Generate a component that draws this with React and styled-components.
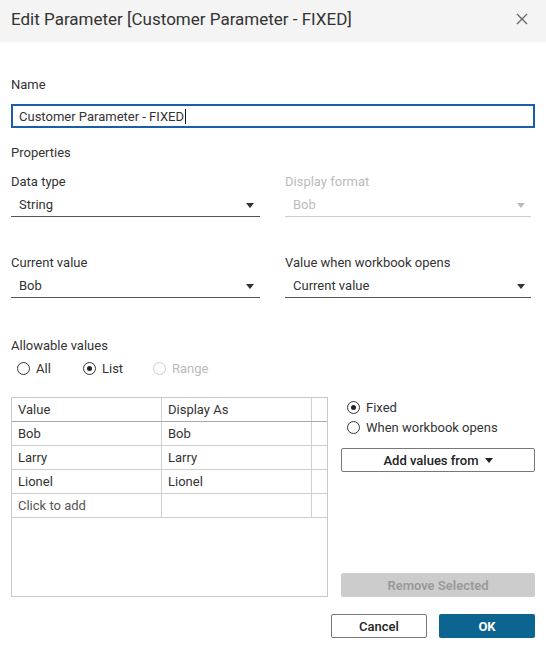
import { styled, createGlobalStyle } from "styled-components";

const GlobalStyle = createGlobalStyle`
  html, body {
    margin: 0;
    padding: 0;
    background: #fff;
  }
  body {
    font-family: Roboto, "Liberation Sans", sans-serif;
    color: #333;
  }
`;

const Dialog = styled.div`
  width: 546px;
  height: 648px;
  display: flex;
  flex-direction: column;
  background: #fff;
  overflow: hidden;
`;

const TitleBar = styled.div`
  height: 42px;
  flex: none;
  background: #f4f4f4;
  display: flex;
  align-items: center;
  justify-content: space-between;
  padding: 0 18px 0 11px;
  box-sizing: border-box;
`;

const Title = styled.h1`
  margin: 0 0 4px;
  font-size: 17px;
  font-weight: 400;
  color: #333;
`;

const CloseButton = styled.button`
  border: none;
  background: none;
  padding: 0;
  margin-bottom: 4px;
  display: flex;
  cursor: pointer;
`;

const Body = styled.div`
  flex: 1;
  display: flex;
  flex-direction: column;
  padding: 0 11px;
`;

const Label = styled.div`
  font-size: 13px;
  line-height: 16px;
  color: ${(p) => (p.disabled ? "#bbb" : "#333")};
  margin-top: ${(p) => p.top || 0}px;
`;

const NameInput = styled.div`
  margin-top: 11px;
  height: 24px;
  box-sizing: border-box;
  border: 2px solid #1a5ea8;
  display: flex;
  align-items: center;
  padding-left: 6px;
  font-size: 13px;
  color: #333;
`;

const Caret = styled.span`
  display: inline-block;
  width: 1px;
  height: 15px;
  background: #111;
  margin-left: 1px;
`;

const FieldGrid = styled.div`
  display: grid;
  grid-template-columns: 249px 246px;
  column-gap: 25px;
  margin-top: ${(p) => p.top}px;
`;

const Field = styled.div`
  display: flex;
  flex-direction: column;
`;

const Select = styled.div`
  margin-top: 4px;
  height: 23px;
  box-sizing: border-box;
  border-bottom: 1px solid ${(p) => (p.disabled ? "#ccc" : "#555")};
  display: flex;
  align-items: center;
  justify-content: space-between;
  padding: 0 6px 1px 8px;
  font-size: 13px;
  color: ${(p) => (p.disabled ? "#bbb" : "#333")};
`;

const Arrow = styled.span`
  width: 0;
  height: 0;
  border-left: 4px solid transparent;
  border-right: 4px solid transparent;
  border-top: 5px solid ${(p) => p.color || "#333"};
  margin-top: 1px;
`;

const RadioRow = styled.div`
  display: flex;
  gap: ${(p) => p.gap || 0}px;
  flex-direction: ${(p) => (p.column ? "column" : "row")};
  margin-top: ${(p) => p.top || 0}px;
  padding-left: ${(p) => p.indent || 0}px;
`;

const RadioItem = styled.label`
  display: flex;
  align-items: center;
  gap: 6px;
  height: 16px;
  font-size: 13px;
  color: ${(p) => (p.disabled ? "#bbb" : "#333")};
  min-width: ${(p) => p.width || 0}px;
`;

const Circle = styled.span`
  width: 13px;
  height: 13px;
  box-sizing: border-box;
  border-radius: 50%;
  border: 1px solid ${(p) => (p.disabled ? "#ccc" : "#333")};
  display: flex;
  align-items: center;
  justify-content: center;

  &::after {
    content: "";
    width: 5px;
    height: 5px;
    border-radius: 50%;
    background: #222;
    display: ${(p) => (p.checked ? "block" : "none")};
  }
`;

const ListArea = styled.div`
  margin-top: 21px;
  display: flex;
  gap: 13px;
`;

const Table = styled.div`
  width: 317px;
  height: 200px;
  box-sizing: border-box;
  border: 1px solid #c8c8c8;
  display: flex;
  flex-direction: column;
`;

const Row = styled.div`
  display: grid;
  grid-template-columns: 150px 150px 1fr;
  height: 24px;
  box-sizing: border-box;
  border-bottom: 1px solid ${(p) => (p.header ? "#a9a9a9" : "#cfcfcf")};
`;

const Cell = styled.div`
  display: flex;
  align-items: center;
  padding-left: 6px;
  font-size: 13px;
  color: ${(p) => (p.muted ? "#555" : "#333")};
  border-right: 1px solid #cfcfcf;

  &:last-child {
    border-right: none;
  }
`;

const SidePanel = styled.div`
  flex: 1;
  display: flex;
  flex-direction: column;
  padding-top: 2px;
`;

const OutlineButton = styled.button`
  height: 24px;
  box-sizing: border-box;
  border: 1px solid #777;
  border-radius: 2px;
  background: #fff;
  font-family: inherit;
  font-size: 13px;
  font-weight: 500;
  color: #222;
  display: flex;
  align-items: center;
  justify-content: center;
  gap: 6px;
  margin-top: ${(p) => p.top || 0}px;
  width: ${(p) => (p.width ? `${p.width}px` : "auto")};
  padding: 0;
`;

const GreyButton = styled.button`
  margin-top: auto;
  height: 24px;
  border: none;
  border-radius: 2px;
  background: #cccccc;
  font-family: inherit;
  font-size: 13px;
  font-weight: 600;
  color: #999;
  padding: 0;
`;

const Footer = styled.div`
  display: flex;
  justify-content: flex-end;
  gap: 12px;
  margin-top: 17px;
`;

const PrimaryButton = styled.button`
  width: 96px;
  height: 24px;
  border: none;
  border-radius: 2px;
  background: #0b6590;
  color: #fff;
  font-family: inherit;
  font-size: 13px;
  font-weight: 700;
  padding: 0;
`;

const rows = [
  ["Bob", "Bob"],
  ["Larry", "Larry"],
  ["Lionel", "Lionel"],
];

function Radio({ label, checked, disabled, width }) {
  return (
    <RadioItem disabled={disabled} width={width}>
      <Circle checked={checked} disabled={disabled} />
      {label}
    </RadioItem>
  );
}

export default function App() {
  return (
    <>
      <GlobalStyle />
      <Dialog>
        <TitleBar>
          <Title>Edit Parameter [Customer Parameter - FIXED]</Title>
          <CloseButton aria-label="Close">
            <svg width="12" height="12" viewBox="0 0 12 12">
              <path d="M1 1L11 11M11 1L1 11" stroke="#666" strokeWidth="1.3" />
            </svg>
          </CloseButton>
        </TitleBar>
        <Body>
          <Label top={35}>Name</Label>
          <NameInput>
            Customer Parameter - FIXED
            <Caret />
          </NameInput>

          <Label top={17}>Properties</Label>
          <FieldGrid top={13}>
            <Field>
              <Label>Data type</Label>
              <Select>
                String
                <Arrow />
              </Select>
            </Field>
            <Field>
              <Label disabled>Display format</Label>
              <Select disabled>
                Bob
                <Arrow color="#bbb" />
              </Select>
            </Field>
          </FieldGrid>

          <FieldGrid top={38}>
            <Field>
              <Label>Current value</Label>
              <Select>
                Bob
                <Arrow />
              </Select>
            </Field>
            <Field>
              <Label>Value when workbook opens</Label>
              <Select>
                Current value
                <Arrow />
              </Select>
            </Field>
          </FieldGrid>

          <Label top={40}>Allowable values</Label>
          <RadioRow top={6} indent={6}>
            <Radio label="All" width={66} />
            <Radio label="List" checked width={70} />
            <Radio label="Range" disabled />
          </RadioRow>

          <ListArea>
            <Table>
              <Row header>
                <Cell>Value</Cell>
                <Cell>Display As</Cell>
                <Cell />
              </Row>
              {rows.map(([v, d]) => (
                <Row key={v}>
                  <Cell>{v}</Cell>
                  <Cell>{d}</Cell>
                  <Cell />
                </Row>
              ))}
              <Row>
                <Cell muted>Click to add</Cell>
                <Cell />
                <Cell />
              </Row>
            </Table>
            <SidePanel>
              <RadioRow column gap={4} indent={6}>
                <Radio label="Fixed" checked />
                <Radio label="When workbook opens" />
              </RadioRow>
              <OutlineButton top={13}>
                Add values from
                <Arrow color="#222" />
              </OutlineButton>
              <GreyButton>Remove Selected</GreyButton>
            </SidePanel>
          </ListArea>

          <Footer>
            <OutlineButton width={96}>Cancel</OutlineButton>
            <PrimaryButton>OK</PrimaryButton>
          </Footer>
        </Body>
      </Dialog>
    </>
  );
}
